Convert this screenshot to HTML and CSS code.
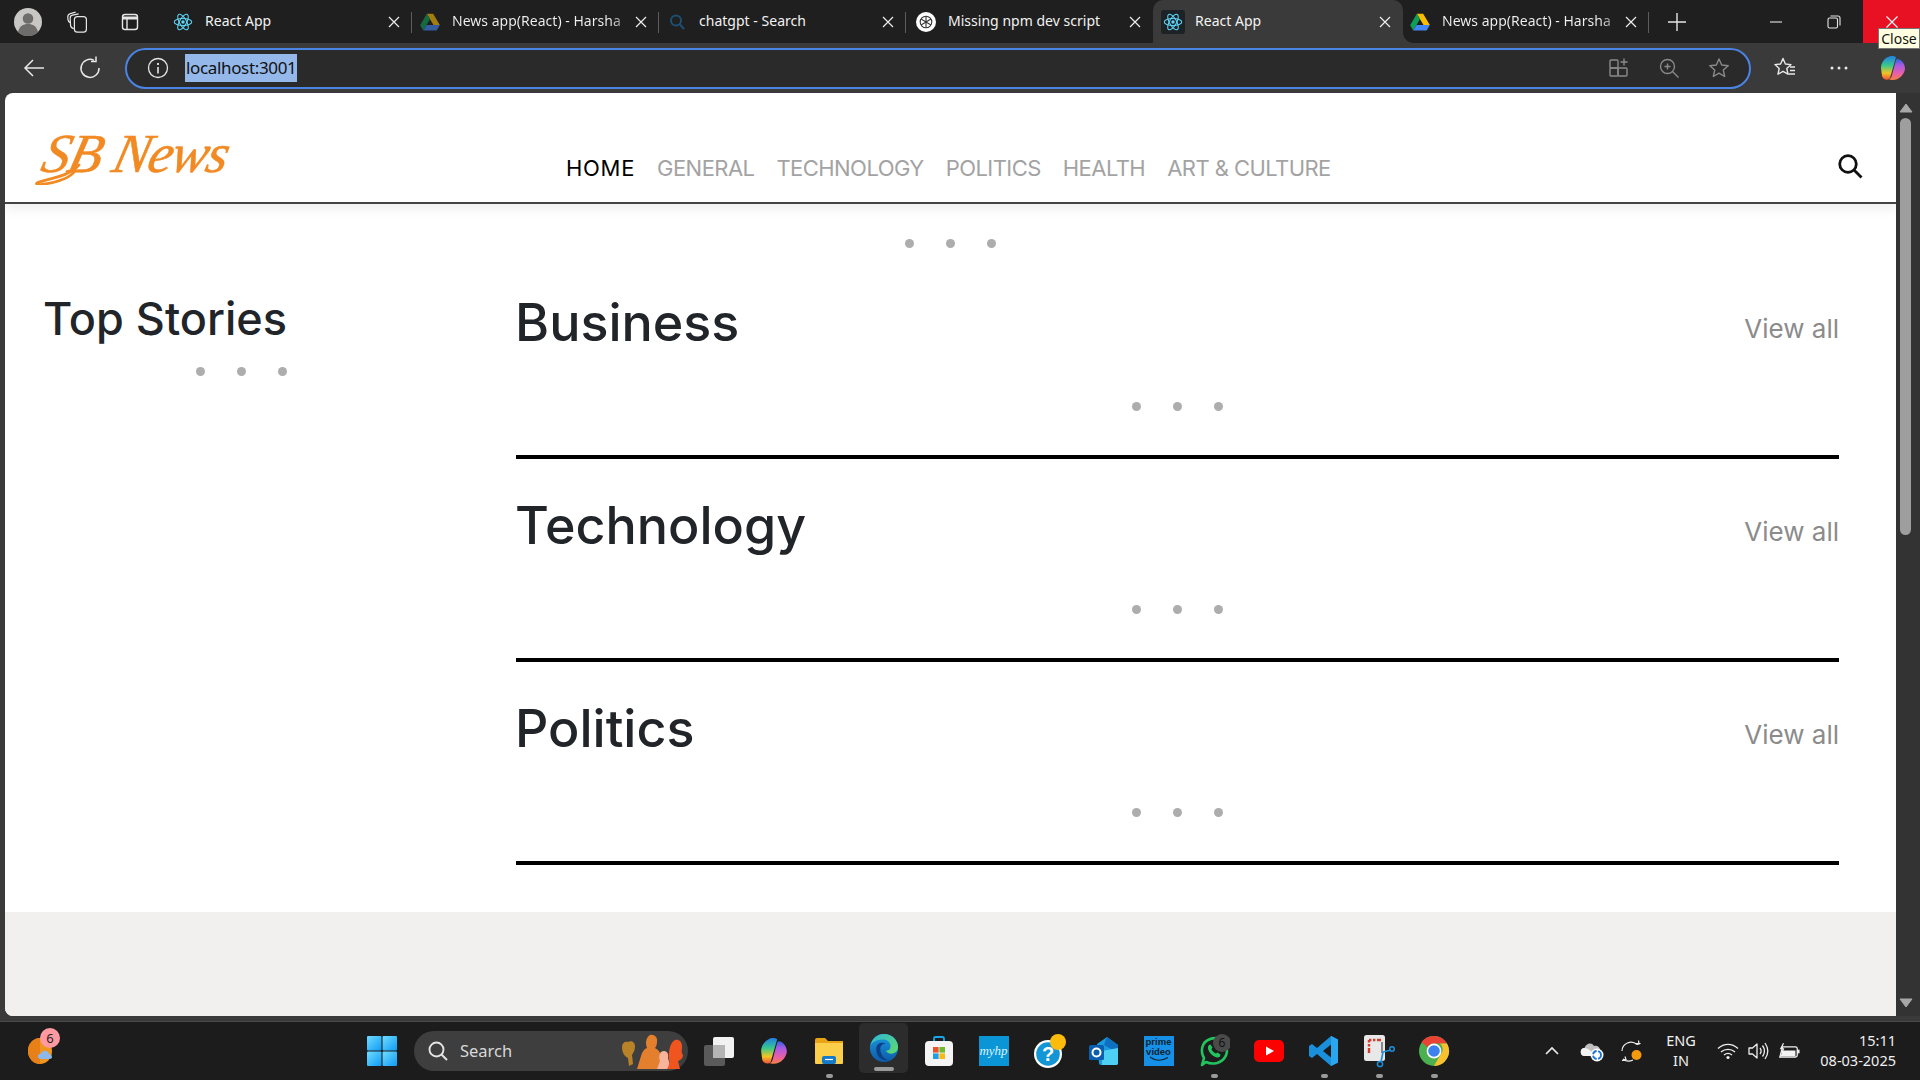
FILE: index.html
```html
<!DOCTYPE html>
<html lang="en">
<head>
<meta charset="utf-8">
<title>React App</title>
<link rel="stylesheet" href="styles.css">
</head>
<body>
<svg class="defs" width="0" height="0" aria-hidden="true">
  <defs>
    <symbol id="react" viewBox="0 0 24 24">
      <g fill="none" stroke="#5ed3f3" stroke-width="1.3">
        <ellipse cx="12" cy="12" rx="10.5" ry="4.2"/>
        <ellipse cx="12" cy="12" rx="10.5" ry="4.2" transform="rotate(60 12 12)"/>
        <ellipse cx="12" cy="12" rx="10.5" ry="4.2" transform="rotate(120 12 12)"/>
      </g>
      <circle cx="12" cy="12" r="2.1" fill="#5ed3f3"/>
    </symbol>
    <symbol id="drive" viewBox="0 0 24 22">
      <path d="M8.2 1h7.6l8 13.6h-7.6z" fill="#fbbc04"/>
      <path d="M8.2 1L.2 14.8l3.8 6.4 8-13.8z" fill="#0f9d58"/>
      <path d="M4 21.200h16l3.800-6.600H7.800z" fill="#4285f4"/>
    </symbol>
    <symbol id="close-x" viewBox="0 0 12 12">
      <path d="M1 1l10 10M11 1L1 11" stroke="currentColor" stroke-width="1.200" fill="none"/>
    </symbol>
    <linearGradient id="cop-a" x1="0" y1="0" x2="0" y2="1">
      <stop offset="0" stop-color="#1f7ee8"/><stop offset=".4" stop-color="#38c98c"/><stop offset=".72" stop-color="#f2c522"/><stop offset="1" stop-color="#f0503a"/>
    </linearGradient>
    <linearGradient id="cop-b" x1="0" y1="0" x2="0" y2="1">
      <stop offset="0" stop-color="#2a62e0"/><stop offset=".3" stop-color="#a85be4"/><stop offset=".7" stop-color="#ea5fa8"/><stop offset="1" stop-color="#f4803f"/>
    </linearGradient>
    <linearGradient id="edge-a" x1="0" y1="0" x2="1" y2="1">
      <stop offset="0" stop-color="#2fb8d8"/><stop offset="1" stop-color="#5fdc6b"/>
    </linearGradient>
    <linearGradient id="edge-b" x1="0" y1="0" x2="0" y2="1">
      <stop offset="0" stop-color="#1a9be0"/><stop offset="1" stop-color="#0d5aa8"/>
    </linearGradient>
    <linearGradient id="win-g" x1="0" y1="0" x2="1" y2="1">
      <stop offset="0" stop-color="#6fdcff"/><stop offset="1" stop-color="#0f9bf5"/>
    </linearGradient>
    <symbol id="copilot" viewBox="0 0 28 28">
      <path d="M9 3C11 1.500 15 1.500 17 3L11 24C9 27 4 26 3 22L2 14C2 9 5 5 9 3z" fill="url(#cop-a)"/>
      <path d="M19 5C23 6 26 10 26 15C25 21 20 26 14 26C12 26 10 25.500 9.500 25C12 25 12.500 23 13 21L17 6C17.500 5 18 4.500 19 5z" fill="url(#cop-b)"/>
    </symbol>
  </defs>
</svg>

<header class="tabstrip">
  <div class="strip-left">
    <span class="avatar">
      <svg viewBox="0 0 28 28" width="28" height="28"><circle cx="14" cy="14" r="14" fill="#c9c7c4"/><circle cx="14" cy="10.500" r="5.300" fill="#6f6d6b"/><path d="M4 24c1.500-6 5-8 10-8s8.500 2 10 8a14 14 0 0 1-20 0z" fill="#6f6d6b"/></svg>
    </span>
    <span class="strip-icon">
      <svg viewBox="0 0 20 20" width="24" height="24" fill="none" stroke="#e6e6e6" stroke-width="1"><rect x="7" y="5.500" width="10" height="13" rx="2.500"/><path d="M6.500 15.500c-1.500-.3-2.500-1-2.700-2.500L3.500 7c-.2-1.400.5-2.400 2-2.700L10.500 3.200"/><path d="M3.500 10.500c-1-.5-1.800-1.400-1.900-2.700L1.500 6C1.400 4.500 2.300 3.400 3.600 3L8 1.800"/></svg>
    </span>
    <span class="strip-icon strip-icon-tabs">
      <svg viewBox="0 0 20 20" width="20" height="20" fill="none" stroke="#e6e6e6" stroke-width="1.400"><rect x="2.500" y="2.500" width="15" height="15" rx="2.500"/><path d="M2.500 6h15" stroke-width="3"/><path d="M7 7v10.500"/></svg>
    </span>
  </div>
  <div class="tab sep">
    <svg class="fav"><use href="#react"/></svg>
    <span class="tab-title">React App</span>
    <svg class="tab-x"><use href="#close-x"/></svg>
  </div>
  <div class="tab sep">
    <svg class="fav fav-dim"><use href="#drive"/></svg>
    <span class="tab-title tab-fade">News app(React) - Harsha</span>
    <svg class="tab-x"><use href="#close-x"/></svg>
  </div>
  <div class="tab sep">
    <svg class="fav" viewBox="0 0 20 20" fill="none" stroke="#1d4f73" stroke-width="2"><circle cx="9" cy="8.500" r="5"/><path d="M13 12.500l4 4.500"/></svg>
    <span class="tab-title">chatgpt - Search</span>
    <svg class="tab-x"><use href="#close-x"/></svg>
  </div>
  <div class="tab before-active">
    <svg class="fav" viewBox="0 0 20 20"><circle cx="10" cy="10" r="10" fill="#fff"/><g fill="none" stroke="#333" stroke-width="1.100"><circle cx="10" cy="10" r="5.800"/><path d="M10 4.200v11.600M5 7l10 6M15 7L5 13"/></g></svg>
    <span class="tab-title">Missing npm dev script</span>
    <svg class="tab-x"><use href="#close-x"/></svg>
  </div>
  <div class="tab active">
    <span class="fav-box"><svg class="fav"><use href="#react"/></svg></span>
    <span class="tab-title">React App</span>
    <svg class="tab-x"><use href="#close-x"/></svg>
  </div>
  <div class="tab tab-last after-active">
    <svg class="fav"><use href="#drive"/></svg>
    <span class="tab-title tab-fade">News app(React) - Harsha</span>
    <svg class="tab-x"><use href="#close-x"/></svg>
  </div>
  <span class="new-tab">
    <svg viewBox="0 0 20 20" width="20" height="20"><path d="M10 1v18M1 10h18" stroke="#e6e6e6" stroke-width="1.400"/></svg>
  </span>
  <div class="win-controls">
    <span class="win-btn"><svg viewBox="0 0 14 14" width="14" height="14"><path d="M1 7h12" stroke="#e6e6e6" stroke-width="1.100"/></svg></span>
    <span class="win-btn"><svg viewBox="0 0 14 14" width="14" height="14" fill="none" stroke="#e6e6e6" stroke-width="1.100"><rect x="1" y="3" width="9.500" height="10" rx="1.500"/><path d="M3.500 1h7.500A2 2 0 0 1 13 3v7.500"/></svg></span>
    <span class="win-btn win-close"><svg viewBox="0 0 14 14" width="14" height="14"><path d="M1.500 1.500l11 11M12.500 1.500l-11 11" stroke="#fff" stroke-width="1.100"/></svg></span>
  </div>
  <span class="tooltip">Close</span>
</header>

<div class="toolbar">
  <span class="tool tool-back"><svg viewBox="0 0 24 24" width="24" height="24" fill="none" stroke="#e8e8e8" stroke-width="1.500"><path d="M22 12H3M11 4l-8 8 8 8"/></svg></span>
  <span class="tool tool-reload"><svg viewBox="0 0 24 24" width="24" height="24" fill="none" stroke="#e8e8e8" stroke-width="1.500"><path d="M16 4.300A9 9 0 1 0 21 12"/><path d="M17 .5v5h-5" transform="translate(1 0)"/></svg></span>
  <div class="address">
    <svg class="addr-info" viewBox="0 0 22 22" width="22" height="22" fill="none" stroke="#e6e6e6" stroke-width="1.300"><circle cx="11" cy="11" r="9.500"/><path d="M11 10v6.500" stroke-width="1.600"/><path d="M11 6v2" stroke-width="1.800"/></svg>
    <span class="addr-sel">localhost:3001</span>
    <span class="addr-icons">
      <svg viewBox="0 0 22 22" width="22" height="22" fill="none" stroke="#8a8a8a" stroke-width="1.400"><rect x="2" y="3" width="8" height="8" rx="1"/><rect x="2" y="11" width="8" height="8" rx="1"/><rect x="10" y="11" width="9" height="8" rx="1"/><path d="M16 1.500v7M12.500 5h7"/></svg>
      <svg viewBox="0 0 22 22" width="22" height="22" fill="none" stroke="#8a8a8a" stroke-width="1.400"><circle cx="9.500" cy="9.500" r="7"/><path d="M14.500 14.500l6 6M9.500 6.500v6M6.500 9.500h6"/></svg>
      <svg viewBox="0 0 22 22" width="22" height="22" fill="none" stroke="#8a8a8a" stroke-width="1.400"><path d="M11 2l2.700 6 6.500.7-4.900 4.400 1.400 6.400L11 16.200l-5.700 3.300 1.400-6.400L1.800 8.700 8.300 8z" stroke-linejoin="round"/></svg>
    </span>
  </div>
  <span class="tool tool-fav"><svg viewBox="0 0 24 24" width="24" height="24" fill="none" stroke="#e8e8e8" stroke-width="1.400"><path d="M10 2.500l2.400 5.500 5.600.6-4.200 3.900 1.200 5.700-5-2.900-5 2.900 1.200-5.700L2 8.600 7.600 8z" stroke-linejoin="round"/><path d="M17 11h5M17 14.500h5M15.500 18h6.500"/></svg></span>
  <span class="tool tool-more"><svg viewBox="0 0 20 6" width="20" height="6" fill="#e8e8e8"><circle cx="3" cy="3" r="1.500"/><circle cx="10" cy="3" r="1.500"/><circle cx="17" cy="3" r="1.500"/></svg></span>
  <span class="tool tool-copilot"><svg width="28" height="28"><use href="#copilot"/></svg></span>
</div>

<div class="viewport">
  <div class="page">
    <nav class="site-nav">
      <a class="logo">
        <svg class="logo-swash" viewBox="0 0 70 24" width="70" height="24" fill="none" stroke="#f28a24" stroke-width="2.800" stroke-linecap="round"><path d="M46 4C38 14 20 17 6 21c-4 1.200-3 3 2 2.500C20 22 36 18 42 10"/></svg>
        <span class="logo-text">SB News</span>
      </a>
      <ul class="nav-links">
        <li class="nav-link current">HOME</li>
        <li class="nav-link">GENERAL</li>
        <li class="nav-link">TECHNOLOGY</li>
        <li class="nav-link">POLITICS</li>
        <li class="nav-link">HEALTH</li>
        <li class="nav-link">ART &amp; CULTURE</li>
      </ul>
      <svg class="nav-search" viewBox="0 0 26 26" width="26" height="26" fill="none" stroke="#111" stroke-width="2.800"><circle cx="11" cy="11" r="8.300"/><path d="M17 17l7.500 7.500"/></svg>
    </nav>

    <div class="dots dots-top"><i></i><i></i><i></i></div>

    <main class="content">
      <aside class="stories">
        <h2 class="stories-title">Top Stories</h2>
        <div class="dots dots-stories"><i></i><i></i><i></i></div>
      </aside>
      <div class="sections">
        <section class="cat">
          <div class="cat-head"><h1 class="cat-title">Business</h1><a class="view-all">View all</a></div>
          <div class="dots dots-cat"><i></i><i></i><i></i></div>
        </section>
        <section class="cat">
          <div class="cat-head"><h1 class="cat-title">Technology</h1><a class="view-all">View all</a></div>
          <div class="dots dots-cat"><i></i><i></i><i></i></div>
        </section>
        <section class="cat">
          <div class="cat-head"><h1 class="cat-title">Politics</h1><a class="view-all">View all</a></div>
          <div class="dots dots-cat"><i></i><i></i><i></i></div>
        </section>
      </div>
    </main>
    <footer class="page-foot"></footer>
  </div>
  <div class="scrollbar">
    <svg class="sb-arrow" viewBox="0 0 14 10" width="14" height="10"><path d="M7 1l6 8H1z" fill="#a8a8a8" stroke="#a8a8a8" stroke-linejoin="round"/></svg>
    <div class="sb-thumb"></div>
    <svg class="sb-arrow sb-arrow-down" viewBox="0 0 14 10" width="14" height="10"><path d="M7 9L1 1h12z" fill="#a8a8a8" stroke="#a8a8a8" stroke-linejoin="round"/></svg>
  </div>
</div>

<footer class="taskbar">
  <div class="tb-left">
    <span class="weather">
      <svg viewBox="0 0 34 36" width="34" height="36"><ellipse cx="12" cy="20" rx="12" ry="13" fill="#f0961e"/><path d="M12 7a12 13 0 0 0 0 26z" fill="#e8801a"/><path d="M13 28c-2.500 0-3.500-1.500-3-3.200.4-1.300 1.500-2 2.800-2 .8-2 2.300-3 4-3 2.300 0 4 1.500 4.200 3.500 1.800 0 3 1.200 3 2.700 0 1.200-1 2-2.500 2z" fill="#8db8ec"/></svg>
      <b class="weather-badge">6</b>
    </span>
  </div>
  <span class="cell">
    <svg viewBox="0 0 28 28" width="30" height="30"><rect x="0" y="0" width="13.500" height="13.500" rx="1" fill="url(#win-g)"/><rect x="14.500" y="0" width="13.500" height="13.500" rx="1" fill="url(#win-g)"/><rect x="0" y="14.500" width="13.500" height="13.500" rx="1" fill="url(#win-g)"/><rect x="14.500" y="14.500" width="13.500" height="13.500" rx="1" fill="url(#win-g)"/></svg>
  </span>
  <div class="tb-search">
    <svg viewBox="0 0 22 22" width="22" height="22" fill="none" stroke="#e4e4e4" stroke-width="1.900"><circle cx="9.500" cy="9.500" r="7"/><path d="M14.500 14.500l5.500 5.500"/></svg>
    <span class="tb-search-text">Search</span>
    <svg class="tb-people" viewBox="0 0 66 36" width="66" height="36">
      <path d="M2 14c0-4 3-6 6-5 3-2 7 0 7 4 0 5-2 7-3 9l1 9-4 2-1-8c-4-2-6-6-6-11z" fill="#b98228"/>
      <path d="M30 2c4-1 8 2 7 7 0 3-1 5-2 6 4 2 6 5 6 9l2 12H17l4-13c1-4 3-7 6-8-2-5-1-11 3-13z" fill="#e37f2d"/>
      <path d="M44 18c3 0 5 3 4 7l3 11H37l3-8c-2-5 0-10 4-10z" fill="#f6b49c"/>
      <path d="M55 7c4-1 7 2 7 6 0 4-1 7 1 9 0 3-2 5-5 6l2 8H47c2-3 3-7 2-10-1-6 1-17 6-19z" fill="#f1551f"/>
    </svg>
  </div>
  <div class="tb-apps">
    <span class="cell"><svg viewBox="0 0 32 32" width="32" height="32"><rect x="1" y="10" width="21" height="21" rx="2" fill="#5a5a5a"/><rect x="10" y="2" width="21" height="21" rx="2" fill="#f2f2f2"/><rect x="10" y="10" width="12" height="13" fill="#b5b5b5"/></svg></span>
    <span class="cell"><svg width="30" height="30"><use href="#copilot"/></svg></span>
    <span class="cell running"><svg viewBox="0 0 30 30" width="30" height="30"><path d="M1 4a2 2 0 0 1 2-2h8l3 3H1z" fill="#e8a317"/><rect x="1" y="5" width="28" height="23" rx="1" fill="#fbcf4a"/><path d="M1 5h28v2H1z" fill="#e8a317"/><rect x="8" y="20" width="14" height="8" rx="2" fill="#1479c9"/><path d="M11 23.500h8" stroke="#fff" stroke-width="1.200"/></svg></span>
    <span class="cell cell-edge running">
      <svg viewBox="0 0 32 32" width="30" height="30"><circle cx="16" cy="16" r="15" fill="url(#edge-b)"/><path d="M1.500 14C3 6 9 1 16 1c8 0 15 6 15 14 0 4-3 7-7 7-3 0-5-1-6-3 3 0 5-2 5-5 0-5-5-8-10-7-6 .8-10 3-12 7z" fill="url(#edge-a)"/><path d="M12 17c0-4 3-6 6-5-1-1-3-2-5-1.500C9 11 7 15 8 20c1 6 7 10 13 9-5-1-9-6-9-12z" fill="#0c3f86"/></svg>
    </span>
    <span class="cell"><svg viewBox="0 0 30 32" width="30" height="32"><path d="M10 7V3.500A1.500 1.500 0 0 1 11.500 2h7A1.500 1.500 0 0 1 20 3.500V7" fill="none" stroke="#1aa7e8" stroke-width="1.800"/><rect x="1" y="6" width="28" height="25" rx="4" fill="#f4f4f4"/><rect x="9" y="12" width="5.600" height="5.600" fill="#e8502e"/><rect x="15.400" y="12" width="5.600" height="5.600" fill="#6dbb2f"/><rect x="9" y="18.400" width="5.600" height="5.600" fill="#1e9ee8"/><rect x="15.400" y="18.400" width="5.600" height="5.600" fill="#f8b912"/></svg></span>
    <span class="cell"><span class="myhp">myhp</span></span>
    <span class="cell"><svg class="help-icon" viewBox="0 0 34 34" width="34" height="34"><circle cx="16" cy="20" r="14" fill="#fff"/><circle cx="16" cy="20" r="11.800" fill="#1395d6"/><text x="16" y="27" class="help-q">?</text><circle cx="26" cy="8" r="8" fill="#fdbc0c"/></svg></span>
    <span class="cell"><svg viewBox="0 0 32 32" width="32" height="32"><path d="M9 9l10-7 11 8v18a2 2 0 0 1-2 2H13a2 2 0 0 1-2-2z" fill="#1a9be0"/><path d="M19 2l11 8v8L16 10z" fill="#0f6fc0"/><path d="M14 16l16-3v15a2 2 0 0 1-2 2H14z" fill="#4ed0f5"/><rect x="1" y="10" width="15" height="15" rx="1.500" fill="#0a5eb0"/><circle cx="8.500" cy="17.500" r="4" fill="none" stroke="#fff" stroke-width="2"/></svg></span>
    <span class="cell"><span class="prime">prime<br>video<svg class="prime-smile" viewBox="0 0 20 6" width="20" height="6" fill="none" stroke="#10232f" stroke-width="1.300"><path d="M1 1c5 4 12 4 18 .5"/></svg></span></span>
    <span class="cell running"><svg viewBox="0 0 32 34" width="32" height="34"><path d="M4 31l2-7C2 17 4 9 10 6c7-4 15-1 18 6 3 8-2 15-9 17-4 1-8 .500-11-1z" fill="none" stroke="#22c45e" stroke-width="2.600" stroke-linejoin="round"/><path d="M11 11c-2 2-1 6 2 9 3 3 7 4.500 9 2.500l.5-2-3-2-1.500 1c-2-.5-4-2.500-4.500-4.500l1-1.500-2-3z" fill="#22c45e"/><circle cx="24" cy="9" r="9" fill="#4a4a4a"/><text x="24" y="13" class="wa-count">6</text></svg></span>
    <span class="cell"><svg viewBox="0 0 30 24" width="30" height="24"><rect width="30" height="22" y="1" rx="5" fill="#f00"/><path d="M12 7.500l8 4.500-8 4.500z" fill="#fff"/></svg></span>
    <span class="cell running"><svg viewBox="0 0 30 32" width="30" height="32"><path d="M22 1l7 3.500v23L22 31 8 19l-5 4-3-2v-10l3-2 5 4zM22 9.500L14 16l8 6.500z" fill="#1a8fdc"/><path d="M22 1l7 3.500v23L22 31z" fill="#2aa6ef"/></svg></span>
    <span class="cell running"><svg viewBox="0 0 32 34" width="32" height="34"><rect x="1" y="1" width="21" height="26" rx="2.500" fill="#e8e8e8"/><path d="M6 6h9M6 6v10" stroke="#d83b2a" stroke-width="2.400" stroke-dasharray="2.400 1.600" fill="none"/><path d="M15 6h3M6 16v3" stroke="#d83b2a" stroke-width="2.400" fill="none"/><path d="M19 8v11" stroke="#888" stroke-width="2"/><path d="M20 18l-2 10M20 18l8-2" stroke="#1b8fdc" stroke-width="1.600" fill="none"/><circle cx="17" cy="30" r="2.600" fill="none" stroke="#1b8fdc" stroke-width="1.500"/><circle cx="29" cy="15" r="2.300" fill="none" stroke="#1b8fdc" stroke-width="1.500"/></svg></span>
    <span class="cell running"><svg viewBox="0 0 32 32" width="32" height="32"><circle cx="16" cy="16" r="15" fill="#4caf50"/><path d="M16 1a15 15 0 0 1 13 7.500H16a7.500 7.500 0 0 0-6.500 3.700L3.500 7A15 15 0 0 1 16 1z" fill="#ea4335"/><path d="M29 8.500A15 15 0 0 1 16 31l6.500-11.300A7.500 7.500 0 0 0 22 8.500z" fill="#fbc02d"/><circle cx="16" cy="16" r="7.400" fill="#fff"/><circle cx="16" cy="16" r="5.800" fill="#3d81ee"/></svg></span>
  </div>
  <div class="tray">
    <span class="tray-chev"><svg viewBox="0 0 16 10" width="16" height="10" fill="none" stroke="#eee" stroke-width="1.600"><path d="M2 8l6-6 6 6"/></svg></span>
    <span class="tray-cloud"><svg viewBox="0 0 24 22" width="24" height="22"><path d="M5 16a4 4 0 0 1-.5-8C6 3 12 2 14 6c3-1 6 1 6 4v6z" fill="#c0c0c0"/><path d="M5 16a4 4 0 0 1-.5-8c3 0 8 3 10 8z" fill="#f2f2f2"/><circle cx="17" cy="15" r="6.500" fill="#fff"/><circle cx="17" cy="15" r="4" fill="none" stroke="#1c76d2" stroke-width="1.800" stroke-dasharray="5 1.500"/></svg></span>
    <span class="tray-sync"><svg viewBox="0 0 24 24" width="24" height="24" fill="none" stroke="#eee" stroke-width="1.200"><path d="M3 12a9 9 0 0 1 15-6.500M21 5v-.5h-4M18 5.500l2-.5-.5-3.500"/><path d="M3 21.500l4-1-1-3M4 20c3 2.500 7 2.500 10 1"/><circle cx="17.500" cy="16" r="5" fill="#f59a0c" stroke="none"/></svg></span>
    <span class="tray-lang">ENG<br>IN</span>
    <span class="tray-wifi"><svg viewBox="0 0 22 18" width="22" height="18" fill="none" stroke="#eee" stroke-width="1.400"><path d="M1 6.500c6-5.500 14-5.500 20 0M4 10c4-3.500 10-3.500 14 0M7 13c2.500-2 5.500-2 8 0"/><circle cx="11" cy="15.500" r="1.600" fill="#eee" stroke="none"/></svg></span>
    <span class="tray-vol"><svg viewBox="0 0 22 20" width="22" height="20" fill="none" stroke="#eee" stroke-width="1.300"><path d="M2 7h3.500L10 3v14l-4.500-4H2z" stroke-linejoin="round"/><path d="M13 7c1.500 2 1.500 4 0 6M15.500 4.500c2.500 3.500 2.500 7.500 0 11M18 2c3.500 5 3.500 11 0 16"/></svg></span>
    <span class="tray-batt"><svg viewBox="0 0 24 20" width="22" height="19"><path d="M5 5h14a2 2 0 0 1 2 2v7a2 2 0 0 1-2 2H2z" fill="none" stroke="#f2f2f2" stroke-width="1.400"/><path d="M5 9h14v6H3z" fill="#f2f2f2"/><rect x="21" y="8" width="2.500" height="4" fill="#f2f2f2"/><path d="M6 1L3 7h3l-2 5" fill="none" stroke="#f2f2f2" stroke-width="1.300"/></svg></span>
    <span class="tray-clock">15:11<br>08-03-2025</span>
  </div>
</footer>
</body>
</html>
```

FILE: styles.css
```css
* { box-sizing: border-box; }
html, body { margin: 0; height: 100%; }
body {
  height: 100vh;
  overflow: hidden;
  display: flex;
  flex-direction: column;
  background: #3a3a3a;
  font-family: "Noto Sans", "Open Sans", sans-serif;
}
.defs { display: block; height: 0; }

/* Tab strip */
.tabstrip {
  position: relative;
  display: flex;
  flex: 0 0 43px;
  background: #1f1f1f;
  color: #f2f2f2;
  font-size: 14px;
}
.strip-left { display: flex; align-items: center; flex: 0 0 165px; }
.avatar { display: flex; margin-left: 14px; }
.strip-icon { display: flex; margin-left: 24px; }
.strip-icon-tabs { margin-left: 30px; }
.tab {
  position: relative;
  display: flex;
  align-items: center;
  flex: 0 0 247px;
  padding: 0 12px 0 8px;
  height: 43px;
  background: #1f1f1f;
}
.tab.sep::after {
  content: "";
  position: absolute;
  right: 0;
  top: 12px;
  height: 21px;
  width: 1px;
  background: #5c5c5c;
}
.fav { width: 20px; height: 20px; flex: none; }
.fav-dim { opacity: .6; }
.tab-title { margin: -3px 0 0 12px; flex: 1; white-space: nowrap; overflow: hidden; letter-spacing: .02px; }
.tab-fade { color: transparent; background: linear-gradient(90deg, #f2f2f2 86%, #1f1f1f 100%); -webkit-background-clip: text; background-clip: text; }
.tab-x { width: 12px; height: 12px; flex: none; color: #eee; margin-right: 0; }
.before-active { flex-basis: 247px; padding-left: 10px; border-bottom-right-radius: 10px; }
.active {
  flex: 0 0 250px;
  background: #3a3a3a;
  border-radius: 10px 10px 0 0;
  padding-left: 10px;
}
.fav-box { display: flex; padding: 2px; background: #1c2226; border-radius: 3px; margin-left: -2px; margin-right: -2px; }
.tab-last { flex-basis: 246px; padding-left: 7px; padding-right: 12px; }
.tab-last::after {
  content: "";
  position: absolute;
  right: 0;
  top: 12px;
  height: 21px;
  width: 1px;
  background: #5c5c5c;
}
.after-active::before {
  content: "";
  position: absolute;
  left: 0;
  bottom: 0;
  width: 10px;
  height: 10px;
  background: radial-gradient(circle at 100% 0, #1f1f1f 9.500px, #3a3a3a 10px);
}
.new-tab { display: flex; align-items: center; margin-left: 18px; }
.win-controls { display: flex; margin-left: auto; }
.win-btn { display: flex; align-items: center; justify-content: center; width: 58px; }
.win-close { width: 57px; background: #e81123; }
.tooltip {
  position: absolute;
  right: 0;
  top: 28px;
  width: 42px;
  height: 21px;
  background: #ffffe1;
  border: 1px solid #767676;
  color: #111;
  font-size: 14px;
  line-height: 19px;
  text-align: center;
  z-index: 2;
}

/* Toolbar */
.toolbar { display: flex; align-items: center; flex: 0 0 50px; background: #3a3a3a; }
.tool { display: flex; align-items: center; justify-content: center; flex: none; }
.tool-back { width: 68px; }
.tool-reload { width: 44px; }
.address {
  display: flex;
  align-items: center;
  flex: 0 0 1626px;
  height: 41px;
  margin-left: 13px;
  padding: 0 19px 0 20px;
  background: #2a2a2a;
  border: 2.500px solid #4a84e4;
  border-radius: 21px;
}
.addr-sel {
  margin-left: 16px;
  padding: 0 1px;
  background: #94b8ea;
  color: #111;
  font-size: 17px;
  line-height: 28px;
  letter-spacing: -.35px;
}
.addr-icons { display: flex; gap: 28px; margin-left: auto; }
.tool-fav { width: 68px; }
.tool-more { width: 40px; }
.tool-copilot { width: 61px; justify-content: flex-start; padding-left: 20px; }

/* Viewport */
.viewport { display: flex; flex: 1; min-height: 0; padding-left: 5px; }
.page {
  display: flex;
  flex-direction: column;
  flex: 0 0 1891px;
  height: 923px;
  background: #fff;
  border-radius: 8px 0 0 8px;
  overflow: hidden;
  font-family: "Inter", "Noto Sans", sans-serif;
}
.site-nav {
  display: flex;
  align-items: flex-end;
  flex: 0 0 111px;
  padding-left: 30px;
  border-bottom: 2px solid #444;
  box-shadow: 0 6px 10px rgba(0, 0, 0, .06);
}
.logo {
  position: relative;
  flex: 0 0 531px;
  height: 54px;
  margin-bottom: 21px;
  color: #f28a24;
}
.logo-text {
  display: inline-block;
  margin-left: 2px;
  font-family: "Liberation Serif", serif;
  font-style: italic;
  font-size: 55px;
  line-height: 54px;
  letter-spacing: -1.400px;
  -webkit-text-stroke: .5px #f28a24;
  transform: skewX(-14deg);
  transform-origin: left bottom;
}
.logo-swash { position: absolute; left: -2px; bottom: -4px; }
.nav-links { display: flex; gap: 22px; margin: 0 0 16px; padding: 0; list-style: none; }
.nav-link { font-size: 22px; line-height: 36px; color: #a3a3a3; letter-spacing: -.55px; }
.current { color: #000; letter-spacing: .7px; }
.nav-search { margin: 0 33px 23px auto; }

.dots { display: flex; justify-content: center; gap: 32px; }
.dots i { width: 9px; height: 9px; border-radius: 50%; background: #adadad; }
.dots-top { margin-top: 35px; }
.dots-stories { margin-top: 12px; }
.dots-cat { margin-top: 39px; }

.content {
  display: grid;
  grid-template-columns: 394px 1323px;
  gap: 78px;
  margin-top: 35px;
  padding-left: 39px;
}
.stories-title {
  margin: 0 0 0 -1px;
  font-size: 45px;
  line-height: 72px;
  font-weight: 500;
  color: #212529;
}
.cat { border-bottom: 4px solid #000; padding-bottom: 44px; margin-bottom: 27px; }
.cat-head { display: flex; justify-content: space-between; align-items: flex-start; }
.cat-title { margin: 0 0 0 -1px; font-size: 52px; line-height: 80px; font-weight: 500; color: #212529; }
.view-all { margin-top: 26px; font-size: 26px; line-height: 40px; color: #8b8b8b; }
.page-foot { flex: 1; margin-top: 20px; background: #f1f0ee; }

/* Scrollbar */
.scrollbar {
  display: flex;
  flex-direction: column;
  align-items: center;
  flex: 0 0 24px;
  height: 923px;
  padding: 10px 5px 8px 0;
  background: #333;
}
.sb-thumb { flex: 0 0 417px; width: 11px; margin-top: 5px; background: #9e9e9e; border-radius: 6px; }
.sb-arrow-down { margin-top: auto; }

/* Taskbar */
.taskbar {
  display: flex;
  align-items: center;
  flex: 0 0 59px;
  background: #1c1c1c;
  color: #f0f0f0;
  border-top: 1px solid #4a4a4a;
}
.tb-left { flex: 0 0 354px; padding-left: 28px; }
.weather { position: relative; display: inline-flex; }
.weather-badge {
  position: absolute;
  left: 12px;
  top: -3px;
  width: 20px;
  height: 20px;
  border-radius: 50%;
  background: #ff9aa2;
  color: #222;
  font-size: 13px;
  font-weight: 400;
  line-height: 20px;
  text-align: center;
}
.cell { position: relative; display: flex; align-items: center; justify-content: center; flex: 0 0 55px; height: 57px; }
.running::after {
  content: "";
  position: absolute;
  left: 50%;
  bottom: 2px;
  width: 7px;
  height: 4px;
  margin-left: -3px;
  border-radius: 2px;
  background: #9a9a9a;
}
.cell-edge { flex-basis: 49px; margin: 0 3px; background: #2c2c2c; border-radius: 5px; height: 50px; }
.cell-edge::after { width: 20px; margin-left: -10px; }
.tb-search {
  display: flex;
  align-items: center;
  flex: 0 0 274px;
  height: 40px;
  margin-left: 5px;
  padding: 0 0 0 13px;
  background: #3e3e3e;
  border-radius: 20px;
  font-size: 16.500px;
  color: #d8d8d8;
}
.tb-search-text { margin-left: 11px; margin-top: -2px; }
.tb-people { margin-left: auto; margin-right: 2px; }
.tb-apps { display: flex; margin-left: 3px; }
.myhp {
  display: flex;
  align-items: center;
  justify-content: center;
  width: 30px;
  height: 30px;
  background: #0a96d6;
  color: #dff4ff;
  font-family: "Liberation Serif", serif;
  font-style: italic;
  font-size: 13px;
}
.help-q { font-family: "Liberation Sans", sans-serif; font-size: 20px; font-weight: 700; fill: #fff; text-anchor: middle; }
.wa-count { font-family: "Noto Sans", sans-serif; font-size: 12px; fill: #111; text-anchor: middle; }
.prime {
  display: block;
  position: relative;
  width: 30px;
  height: 30px;
  padding-top: 1px;
  background: #1590e6;
  color: #10232f;
  font-family: "Liberation Sans", sans-serif;
  font-weight: 700;
  font-size: 9.500px;
  line-height: 9.500px;
  text-align: center;
}
.prime-smile { display: block; margin: 0 auto; }
.tray { display: flex; align-items: center; flex: 1; margin-left: 71px; padding-right: 24px; font-size: 14.500px; }
.tray > span { display: flex; justify-content: center; align-items: center; }
.tray-chev { flex: 0 0 40px; }
.tray-cloud { flex: 0 0 40px; }
.tray-sync { flex: 0 0 38px; }
.tray-lang { flex: 0 0 62px; text-align: center; line-height: 20px; margin-top: -2px; }
.tray-wifi { flex: 0 0 32px; }
.tray-vol { flex: 0 0 28px; }
.tray-batt { flex: 0 0 34px; }
.tray > .tray-clock { flex: 1; justify-content: flex-end; text-align: right; line-height: 20px; margin-top: -2px; }
```
